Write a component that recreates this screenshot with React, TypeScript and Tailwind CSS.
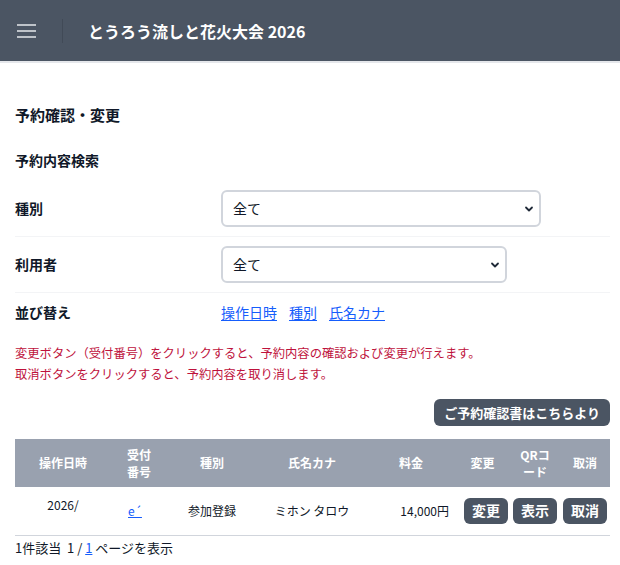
import React from 'react';

const font = { fontFamily: '"Noto Sans CJK JP", "Noto Sans", sans-serif' };

function Chevron() {
  return (
    <svg width="12" height="12" viewBox="0 0 20 20" className="pointer-events-none absolute right-[6px] top-1/2 -translate-y-1/2">
      <path d="M5 7.5l5 5 5-5" fill="none" stroke="#1f2937" strokeWidth="3" strokeLinecap="round" strokeLinejoin="round" />
    </svg>
  );
}

function SelectBox({ width }: { width: string }) {
  return (
    <div className={`relative ${width}`}>
      <select
        className="w-full h-[37px] appearance-none rounded-md border-2 border-gray-300 bg-white pl-[10px] pr-8 text-[14px] text-gray-900 focus:outline-none"
        style={font}
        defaultValue="all"
      >
        <option value="all">全て</option>
      </select>
      <Chevron />
    </div>
  );
}

export default function App() {
  return (
    <div className="min-h-screen w-[620px] bg-white text-gray-900" style={font}>
      <header className="flex h-[61px] items-center bg-[#4b5563] border-b-2 border-gray-200 box-content">
        <div className="flex w-[62px] pl-[17px]">
          <svg width="19" height="16" viewBox="0 0 19 16">
            <path d="M0 2h19M0 8h19M0 14h19" stroke="#e5e7eb" strokeWidth="1.6" />
          </svg>
        </div>
        <div className="h-[24px] w-px bg-[#414a57]" />
        <h1 className="ml-[25px] text-[16px] font-bold text-white">とうろう流しと花火大会 2026</h1>
      </header>

      <main className="pl-[15px] pr-[10px]">
        <h2 className="mt-[40px] text-[15px] font-bold leading-[24px]">予約確認・変更</h2>
        <h3 className="mt-[21px] text-[14px] font-bold leading-[24px]">予約内容検索</h3>

        <div className="mt-[11px]">
          <div className="flex items-center border-b border-gray-100 pt-[7px] pb-[9px]">
            <span className="w-[206px] text-[14px] font-bold">種別</span>
            <SelectBox width="w-[320px]" />
          </div>
          <div className="flex items-center border-b border-gray-100 pt-[9px] pb-[9px]">
            <span className="w-[206px] text-[14px] font-bold">利用者</span>
            <SelectBox width="w-[286px]" />
          </div>
          <div className="flex items-center leading-[20px] pt-[9px] pb-[9px]">
            <span className="w-[206px] text-[14px] font-bold">並び替え</span>
            <div className="flex gap-[12px] text-[14px] text-blue-600">
              <a href="#" className="underline underline-offset-2">操作日時</a>
              <a href="#" className="underline underline-offset-2">種別</a>
              <a href="#" className="underline underline-offset-2">氏名カナ</a>
            </div>
          </div>
        </div>

        <div className="mt-[12px] text-[12.3px] leading-[21px] text-[#be123c]">
          <p>変更ボタン（受付番号）をクリックすると、予約内容の確認および変更が行えます。</p>
          <p>取消ボタンをクリックすると、予約内容を取り消します。</p>
        </div>

        <div className="mt-[14px] flex justify-end">
          <button className="h-[27px] rounded-md bg-[#4b5563] px-[10px] text-[13px] font-bold text-white">
            ご予約確認書はこちらより
          </button>
        </div>

        <table className="mt-[13px] w-full table-fixed border-collapse text-[12px]">
          <colgroup>
            <col className="w-[96px]" />
            <col className="w-[56px]" />
            <col className="w-[90px]" />
            <col className="w-[110px]" />
            <col className="w-[88px]" />
            <col className="w-[55px]" />
            <col className="w-[50px]" />
            <col className="w-[50px]" />
          </colgroup>
          <thead>
            <tr className="h-[48px] bg-gray-400 text-white">
              <th className="font-bold">操作日時</th>
              <th className="font-bold leading-[17px]">受付<br />番号</th>
              <th className="font-bold">種別</th>
              <th className="font-bold">氏名カナ</th>
              <th className="font-bold">料金</th>
              <th className="font-bold">変更</th>
              <th className="font-bold leading-[17px]">QRコ<br />ード</th>
              <th className="font-bold">取消</th>
            </tr>
          </thead>
          <tbody>
            <tr className="h-[48px] border-b border-gray-300">
              <td className="text-center align-top pt-[9px]">2026/</td>
              <td className="text-center pr-[8px]">
                <a href="#" className="text-blue-600 underline">e´</a>
              </td>
              <td className="text-center">参加登録</td>
              <td className="text-center">ミホン タロウ</td>
              <td className="text-right pr-[6px]">14,000円</td>
              <td className="text-right pr-[2px]">
                <button className="h-[26px] w-[44px] rounded-md bg-[#4b5563] text-[14px] font-bold text-white">変更</button>
              </td>
              <td className="text-center">
                <button className="h-[26px] w-[44px] rounded-md bg-[#4b5563] text-[14px] font-bold text-white">表示</button>
              </td>
              <td className="text-center">
                <button className="h-[26px] w-[44px] rounded-md bg-[#4b5563] text-[14px] font-bold text-white">取消</button>
              </td>
            </tr>
          </tbody>
        </table>

        <p className="mt-[2px] text-[13px] leading-[20px]">
          1件該当&nbsp;&nbsp;1 / <a href="#" className="text-blue-600 underline">1</a> ページを表示
        </p>
      </main>
    </div>
  );
}
